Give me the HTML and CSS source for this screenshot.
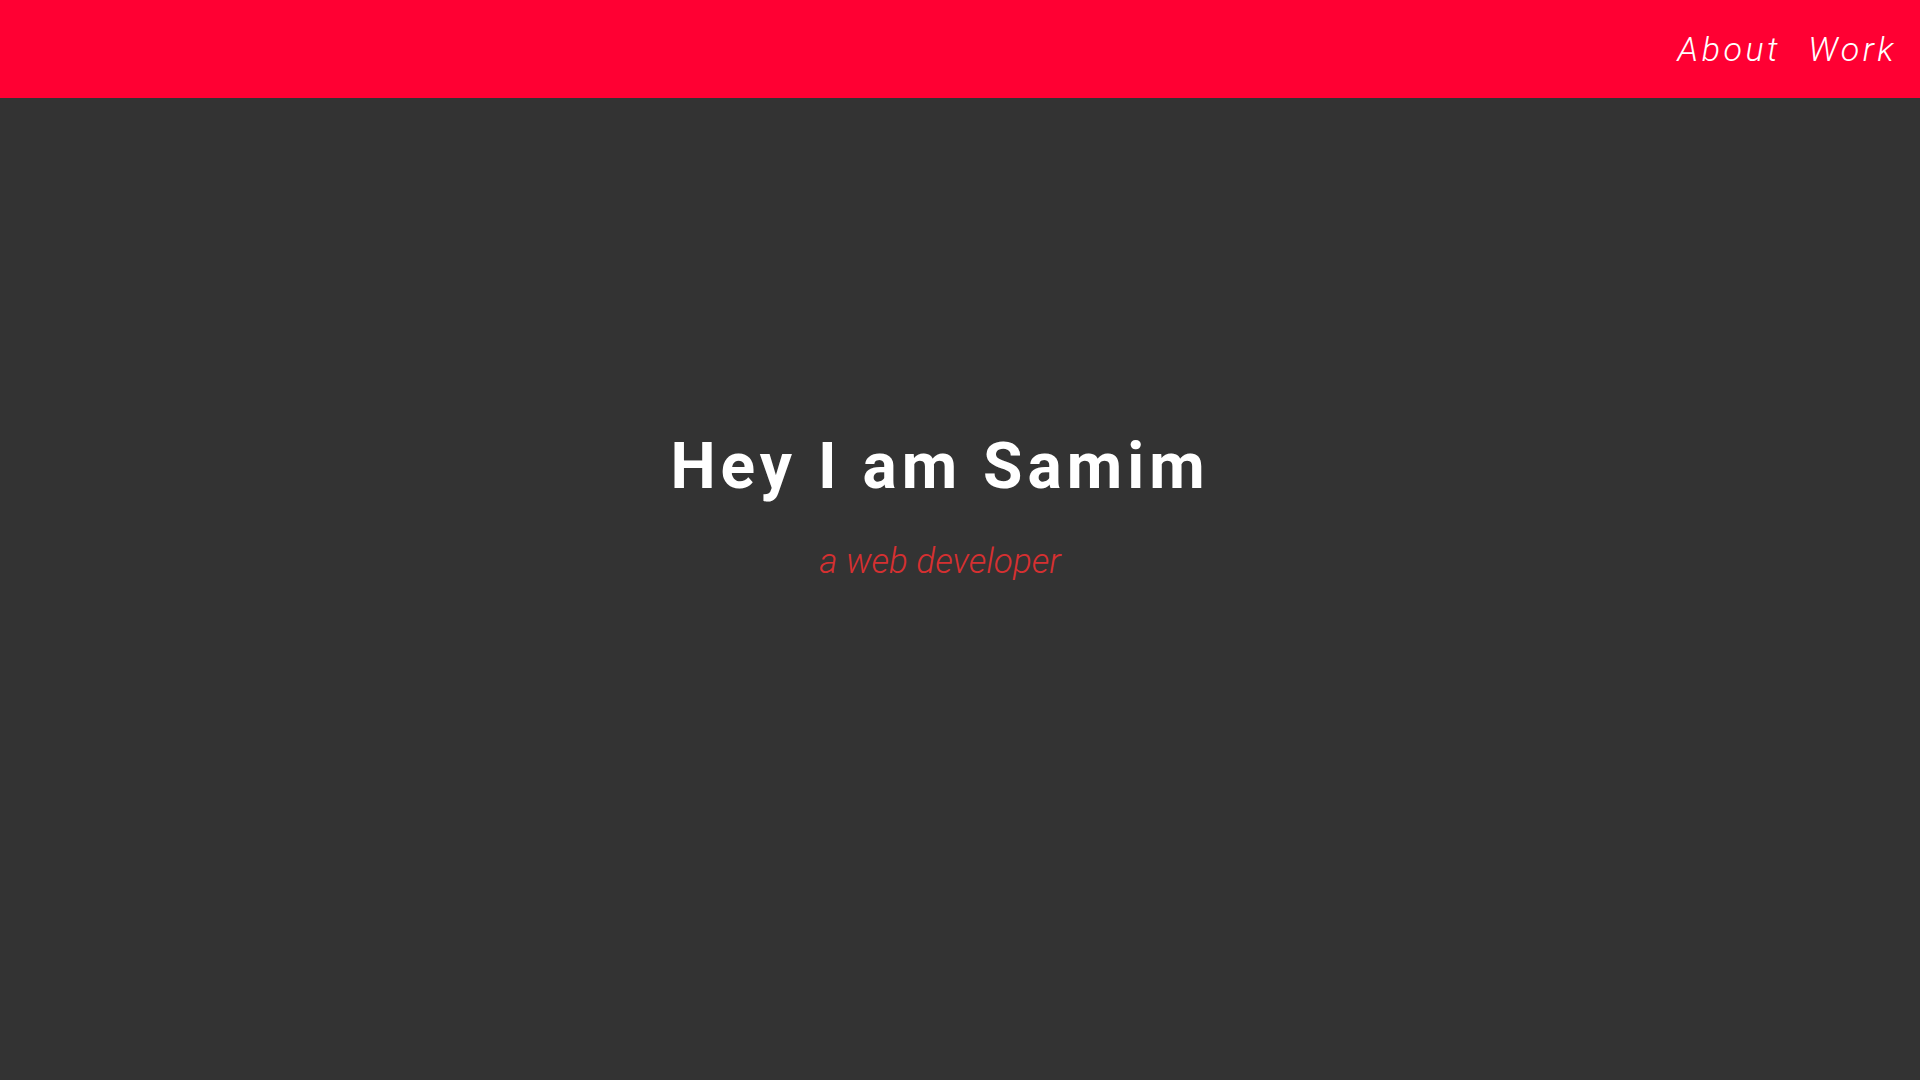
FILE: index.html
```html
<!DOCTYPE html>
<html lang="en">
<head>
<meta charset="utf-8">
<title>Samim</title>
<link rel="stylesheet" href="styles.css">
</head>
<body>
<header class="topbar">
  <nav class="nav">
    <a class="nav-link" href="#">About</a>
    <a class="nav-link" href="#">Work</a>
  </nav>
</header>
<main class="hero">
  <h1 class="hero-title">Hey I am Samim</h1>
  <p class="hero-sub">a web developer</p>
</main>
</body>
</html>
```

FILE: styles.css
```css
html, body {
  margin: 0;
  padding: 0;
  height: 100%;
}
body {
  background: #333333;
  font-family: Roboto, "Liberation Sans", sans-serif;
  display: flex;
  flex-direction: column;
}
.topbar {
  height: 98px;
  background: #ff0033;
  display: flex;
  align-items: center;
  justify-content: flex-end;
  padding-right: 23px;
}
.nav {
  display: flex;
  gap: 27px;
}
.nav-link {
  color: #ffffff;
  text-decoration: none;
  font-style: italic;
  font-weight: 300;
  font-size: 34px;
  letter-spacing: 3.5px;
}
.hero {
  flex: 1;
  display: flex;
  flex-direction: column;
  align-items: center;
  padding-right: 40px;
  padding-top: 331px;
}
.hero-title {
  margin: 0;
  color: #ffffff;
  font-weight: 700;
  font-size: 64px;
  letter-spacing: 5px;
  line-height: 75px;
}
.hero-sub {
  margin: 37px 0 0;
  color: #d63031;
  font-style: italic;
  font-weight: 300;
  font-size: 35px;
}
```
